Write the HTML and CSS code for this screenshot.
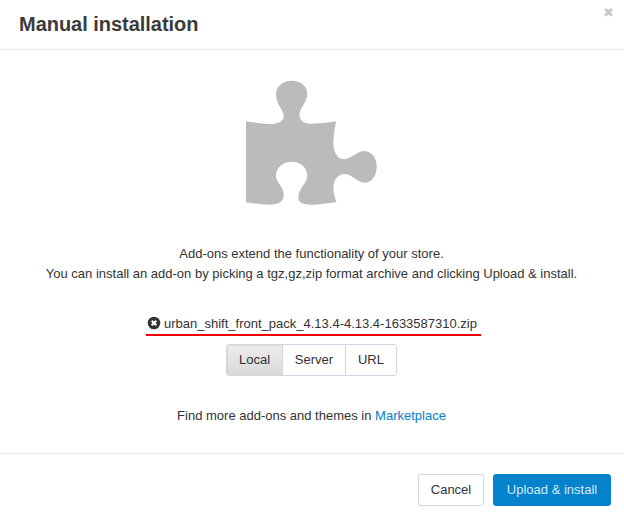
FILE: index.html
```html
<!DOCTYPE html>
<html lang="en">
<head>
<meta charset="utf-8">
<title>Manual installation</title>
<link rel="stylesheet" href="styles.css">
</head>
<body>
<div class="modal">
  <header class="modal-header">
    <h3 class="modal-title">Manual installation</h3>
    <span class="modal-close">&#10006;</span>
  </header>
  <main class="modal-body">
    <svg class="puzzle" width="131" height="125" viewBox="246 80 131 125" aria-hidden="true">
      <path fill="#bbbbbb" d="M246 121.3C254 122.5 262 124 270 124C276 124 281.5 122.5 283.3 118.5C285 114.5 281.5 109.5 279 105.5C277 102 276 97.5 276 94C276.5 86 283 80.7 291.7 80.7C300.5 80.7 307.3 86 307.3 94C307.3 98 305.5 102 303 105.5C300.5 109.5 298.5 114.5 300 118C302 122.5 306 123.7 311 123.7C319 123.7 328 122.5 336 121.3C334.5 130 333.3 137 333.3 143C333.3 151 337 159 343.5 159C349 159 353 155.5 357 153.2C360 151.7 362.5 151 365 151C372 151.5 376.7 158 376.7 166.8C376.7 175.5 372 182.2 365 182.7C362 182.7 358.5 181 355.5 179C352 176.5 348.5 174 345 174C338 174 333.3 180 333.3 188C333.3 193 335 197 336.3 202.3C328 203.3 319 204.7 310 204.7C304 204.7 298.5 203 298.3 197.5C298.2 193.5 300 190 302.5 186.5C305 183 307.3 179.5 307.3 175.5C307.3 167.5 300.5 161.7 291.7 161.7C283 161.7 276 167.5 276 175.5C276 179.5 278.5 183 281 186.5C283 189.5 284.5 193 283.3 197.5C282 203 276 204.7 270 204.7C262 204.7 254 203.3 246 202.3Z"/>
    </svg>
    <p class="intro">Add-ons extend the functionality of your store.<br>You can install an add-on by picking a tgz,gz,zip format archive and clicking Upload &amp; install.</p>
    <div class="file-row">
      <svg class="file-remove" width="14" height="14" viewBox="0 0 14 14" aria-hidden="true">
        <circle cx="7" cy="7" r="6.3" fill="#333"/>
        <path d="M4.7 4.7l4.6 4.6M9.3 4.7l-4.6 4.6" stroke="#fff" stroke-width="2" fill="none"/>
      </svg>
      <span class="file-name">urban_shift_front_pack_4.13.4-4.13.4-1633587310.zip</span>
    </div>
    <div class="tabs">
      <span class="tab tab-active">Local</span>
      <span class="tab">Server</span>
      <span class="tab">URL</span>
    </div>
    <p class="more">Find more add-ons and themes in <a href="#" class="link">Marketplace</a></p>
  </main>
  <footer class="modal-footer">
    <button class="btn btn-cancel">Cancel</button>
    <button class="btn btn-primary">Upload &amp; install</button>
  </footer>
</div>
</body>
</html>
```
FILE: styles.css
```css
* { box-sizing: border-box; }
html, body { margin: 0; padding: 0; }
body {
  width: 624px;
  height: 524px;
  background: #fff;
  color: #333;
  font-family: "Liberation Sans", Arial, sans-serif;
  font-size: 13px;
  line-height: 20px;
  overflow: hidden;
}
.modal { display: flex; flex-direction: column; height: 524px; }
.modal-header {
  height: 50px;
  padding: 0 19px;
  border-bottom: 1px solid #e9ecef;
  display: flex;
  justify-content: space-between;
  align-items: flex-start;
}
.modal-title {
  margin: 10px 0 0;
  font-size: 20px;
  letter-spacing: -0.03px;
  line-height: 28px;
  font-weight: 700;
  color: #3b3b3b;
}
.modal-close {
  margin: 5px -9px 0 0;
  font-size: 13px;
  line-height: 16px;
  color: #c8c8c8;
  font-family: "DejaVu Sans", sans-serif;
}
.modal-body {
  height: 404px;
  border-bottom: 1px solid #e9ecef;
  display: flex;
  flex-direction: column;
  align-items: center;
  padding: 30px 1px 0 0;
}
.puzzle { display: block; flex: none; }
.intro {
  margin: 39px 0 0;
  text-align: center;
}
.file-row {
  margin: 30px 0 0 4px;
  width: 335px;
  height: 22px;
  border-bottom: 2px solid #f00000;
  display: flex;
  align-items: flex-start;
  gap: 3px;
  padding-left: 1px;
}
.file-remove { margin-top: 2px; flex: none; }
.file-name { white-space: nowrap; }
.tabs {
  margin-top: 8px;
  display: flex;
  height: 32px;
  width: 171px;
  border: 1px solid #cfd8e0;
  border-radius: 3px;
}
.tab {
  flex: none;
  width: 63px;
  text-align: center;
  line-height: 30px;
  border-left: 1px solid #cfd8e0;
  background: #fff;
}
.tab:first-child {
  width: 55px;
  border-left: 0;
  border-radius: 2px 0 0 2px;
  background: linear-gradient(#ededed, #d9d9d9);
  box-shadow: inset 1px 1px 1px rgba(0,0,0,.06);
}
.tab:last-child { width: 51px; border-radius: 0 2px 2px 0; }
.more { margin: 30px 0 0; }
.link { color: #0482cc; text-decoration: none; }
.modal-footer {
  flex: 1;
  display: flex;
  justify-content: flex-end;
  align-items: flex-start;
  gap: 9px;
  padding: 20px 13px 0 0;
}
.btn {
  height: 32px;
  padding: 0;
  border: 1px solid #cfd8e0;
  border-radius: 3px;
  background: #fff;
  color: #333;
  font: 13px/20px "Liberation Sans", Arial, sans-serif;
}
.btn-cancel { width: 66px; }
.btn-primary {
  width: 118px;
  border-color: #0482cc;
  background: #0482cc;
  color: #d3ecfb;
}
```
